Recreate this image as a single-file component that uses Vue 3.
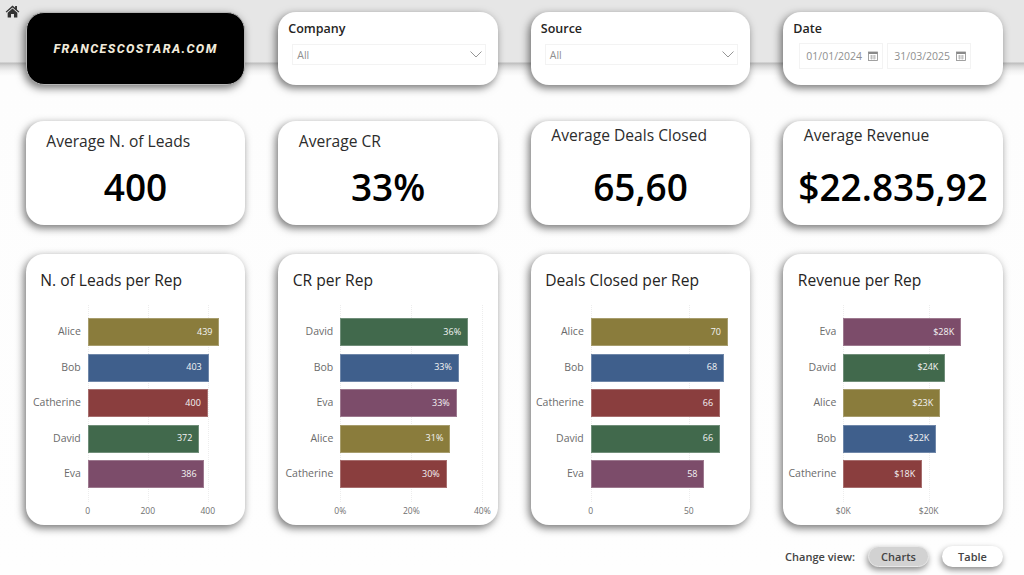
<script setup>
const colors = { Alice: '#8a7c3c', Bob: '#3f5f8c', Catherine: '#8a3e3e', David: '#41694c', Eva: '#7c4c6a' }

const kpis = [
  { title: 'Average N. of Leads', value: '400', cls: 'low' },
  { title: 'Average CR', value: '33%', cls: 'low' },
  { title: 'Average Deals Closed', value: '65,60', cls: 'high' },
  { title: 'Average Revenue', value: '$22.835,92', cls: 'high' },
]

const charts = [
  {
    title: 'N. of Leads per Rep', left: 62, scale: 0.3,
    ticks: [{ v: 0, l: '0' }, { v: 200, l: '200' }, { v: 400, l: '400' }],
    rows: [['Alice', 439, '439'], ['Bob', 403, '403'], ['Catherine', 400, '400'], ['David', 372, '372'], ['Eva', 386, '386']],
  },
  {
    title: 'CR per Rep', left: 62, scale: 3.55,
    ticks: [{ v: 0, l: '0%' }, { v: 20, l: '20%' }, { v: 40, l: '40%' }],
    rows: [['David', 36, '36%'], ['Bob', 33.4, '33%'], ['Eva', 32.8, '33%'], ['Alice', 31, '31%'], ['Catherine', 30, '30%']],
  },
  {
    title: 'Deals Closed per Rep', left: 60, scale: 1.96,
    ticks: [{ v: 0, l: '0' }, { v: 50, l: '50' }],
    rows: [['Alice', 70, '70'], ['Bob', 68, '68'], ['Catherine', 66, '66'], ['David', 66, '66'], ['Eva', 58, '58']],
  },
  {
    title: 'Revenue per Rep', left: 60, scale: 4.27,
    ticks: [{ v: 0, l: '$0K' }, { v: 20, l: '$20K' }],
    rows: [['Eva', 27.6, '$28K'], ['David', 23.9, '$24K'], ['Alice', 22.7, '$23K'], ['Bob', 21.8, '$22K'], ['Catherine', 18.5, '$18K']],
  },
]
</script>

<template>
  <div class="page">
    <svg class="home" viewBox="0 0 16 14" width="15" height="13">
      <path d="M8 0.5 L0.6 7.2 L1.6 8.2 L8 2.6 L14.4 8.2 L15.4 7.2 L12.8 4.8 V1.2 H10.8 V3 Z" fill="#333" />
      <path d="M8 3.8 L2.8 8.4 V13.5 H6.4 V9.6 H9.6 V13.5 H13.2 V8.4 Z" fill="#333" />
    </svg>

    <div class="grid">
      <div class="card logo"><span>FRANCESCOSTARA.COM</span></div>

      <div class="card slicer">
        <div class="slabel">Company</div>
        <div class="drop">
          <span>All</span>
          <svg viewBox="0 0 12 7" width="12" height="7"><path d="M0.5 0.5 L6 6 L11.5 0.5" fill="none" stroke="#8a8a8a" stroke-width="0.9" /></svg>
        </div>
      </div>

      <div class="card slicer">
        <div class="slabel">Source</div>
        <div class="drop">
          <span>All</span>
          <svg viewBox="0 0 12 7" width="12" height="7"><path d="M0.5 0.5 L6 6 L11.5 0.5" fill="none" stroke="#8a8a8a" stroke-width="0.9" /></svg>
        </div>
      </div>

      <div class="card slicer">
        <div class="slabel">Date</div>
        <div class="dates">
          <div v-for="d in ['01/01/2024', '31/03/2025']" :key="d" class="date">
            <span>{{ d }}</span>
            <svg viewBox="0 0 10 10" width="10" height="10">
              <rect x="0.5" y="1" width="9" height="8.5" fill="none" stroke="#8a8a8a" stroke-width="0.8" />
              <rect x="0.5" y="1" width="9" height="2" fill="#8a8a8a" />
              <path d="M2 5h6M2 7h6M3.6 4v4.6M6.2 4v4.6" stroke="#aaa" stroke-width="0.7" />
            </svg>
          </div>
        </div>
      </div>

      <div v-for="k in kpis" :key="k.title" class="card kpi" :class="k.cls">
        <div class="ktitle">{{ k.title }}</div>
        <div class="kvalue">{{ k.value }}</div>
      </div>

      <div v-for="c in charts" :key="c.title" class="card chart">
        <div class="ctitle">{{ c.title }}</div>
        <div class="plot">
          <div class="lines" :style="{ marginLeft: c.left + 'px' }">
            <i v-for="t in c.ticks" :key="t.l" :style="{ left: t.v * c.scale + 'px' }"></i>
          </div>
          <div v-for="r in c.rows" :key="r[0]" class="row">
            <div class="name" :style="{ width: c.left + 'px' }">{{ r[0] }}</div>
            <div class="bar" :style="{ width: r[1] * c.scale + 'px', background: colors[r[0]] }">{{ r[2] }}</div>
          </div>
        </div>
        <div class="axis" :style="{ marginLeft: c.left + 'px' }">
          <span v-for="t in c.ticks" :key="t.l" :style="{ left: t.v * c.scale + 'px' }">{{ t.l }}</span>
        </div>
      </div>
    </div>

    <div class="footer">
      <span class="cv">Change view:</span>
      <button class="pill on">Charts</button>
      <button class="pill">Table</button>
    </div>
  </div>
</template>

<style>
html, body { margin: 0; background: #fff; }
</style>

<style scoped>
.page {
  position: relative;
  width: 1024px;
  height: 575px;
  overflow: hidden;
  box-sizing: border-box;
  padding: 12px 21px 0 25.8px;
  font-family: "Open Sans", "Noto Sans", sans-serif;
  background: linear-gradient(#e6e6e6 0, #e6e6e6 62px, #bdbdbd 63px, #d8d8d8 66px, #f2f2f2 71px, #fdfdfd 76px, #fefefe 100%);
}
.home { position: absolute; left: 5px; top: 5px; }
.grid {
  display: grid;
  grid-template-columns: repeat(4, 219.5px);
  grid-template-rows: 73px 140px 300px;
  column-gap: 33px;
}
.card {
  background: #fff;
  border-radius: 18px;
  box-shadow: -2px 3px 8px rgba(0, 0, 0, 0.55);
  box-sizing: border-box;
}
.grid > .kpi { margin-top: 36px; height: 104px; }
.grid > .chart { margin-top: 29px; height: 271px; }

.logo {
  background: #000;
  border: 1px solid #b5b5b5;
  display: flex;
  align-items: center;
  justify-content: center;
}
.logo span {
  color: #f1eadb;
  font-family: Roboto, sans-serif;
  font-weight: 800;
  font-style: italic;
  font-size: 12.5px;
  letter-spacing: 1.4px;
}
.slicer { padding: 8px 10px; }
.slabel { font-size: 12.5px; font-weight: 600; color: #252423; line-height: 17px; }
.drop {
  margin: 7px 2px 0 4px;
  height: 21px;
  border: 1px solid #f3f3f3;
  box-sizing: border-box;
  display: flex;
  align-items: center;
  justify-content: space-between;
  padding: 0 3px 0 4px;
  font-size: 10.5px;
  color: #8f8f8f;
}
.dates { display: flex; gap: 4px; margin: 6px 0 0 6px; }
.date {
  width: 84px;
  height: 26px;
  box-sizing: border-box;
  border: 1px solid #f3f3f3;
  display: flex;
  align-items: center;
  justify-content: space-between;
  padding: 0 4px 0 6px;
  font-size: 10.5px;
  color: #8f8f8f;
}
.kpi { padding: 0 0 0 20.5px; display: flex; flex-direction: column; }
.ktitle { font-size: 15.6px; line-height: 22px; color: #2c2c2c; font-weight: 500; }
.low .ktitle { margin-top: 9px; }
.high .ktitle { margin-top: 3px; }
.kvalue {
  margin-left: -20.5px;
  text-align: center;
  font-size: 37px;
  font-weight: 600;
  line-height: 52px;
  color: #000;
}
.low .kvalue { margin-top: 9px; }
.high .kvalue { margin-top: 15px; }

.chart { padding: 15px 0 0 0; }
.ctitle { margin-left: 14.5px; font-size: 15.6px; line-height: 22px; font-weight: 500; color: #252423; }
.plot { position: relative; margin-top: 14px; padding-top: 13px; height: 184px; box-sizing: border-box; display: flex; flex-direction: column; gap: 7.6px; }
.lines { position: absolute; top: 0; bottom: 0; left: 0; right: 0; margin-bottom: -13px; }
.lines i { position: absolute; top: 0; bottom: 0; border-left: 1px dotted #ededed; }
.row { position: relative; display: flex; align-items: center; height: 28px; flex: none; }
.name {
  flex: none;
  box-sizing: border-box;
  padding: 0 7px 2px 0;
  text-align: right;
  white-space: nowrap;
  font-size: 10.5px;
  color: #6b6b6b;
}
.bar {
  height: 28px;
  box-sizing: border-box;
  border: 1px solid rgba(255, 255, 255, 0.25);
  display: flex;
  align-items: center;
  justify-content: flex-end;
  padding: 0 6px 2px 0;
  color: #f4f4f4;
  font-size: 9px;
}
.axis { position: relative; height: 12px; margin-top: 16px; }
.axis span {
  position: absolute;
  top: 0;
  transform: translateX(-50%);
  font-size: 8.5px;
  line-height: 12px;
  color: #6f6f6f;
  white-space: nowrap;
}
.footer {
  display: flex;
  align-items: center;
  justify-content: flex-end;
  margin-top: 20px;
  height: 22px;
  gap: 13px;
}
.cv { font-size: 11px; font-weight: 600; color: #444; margin-left: -1px; }
.pill {
  font-family: inherit;
  font-size: 11px;
  font-weight: 600;
  color: #444;
  height: 21px;
  width: 61px;
  padding: 0;
  border: none;
  border-radius: 11px;
  background: #fff;
  box-shadow: -1px 3px 6px rgba(0, 0, 0, 0.45);
}
.pill.on {
  background: #d2d2d2;
  border: 1px solid #e8e8e8;
}
</style>
